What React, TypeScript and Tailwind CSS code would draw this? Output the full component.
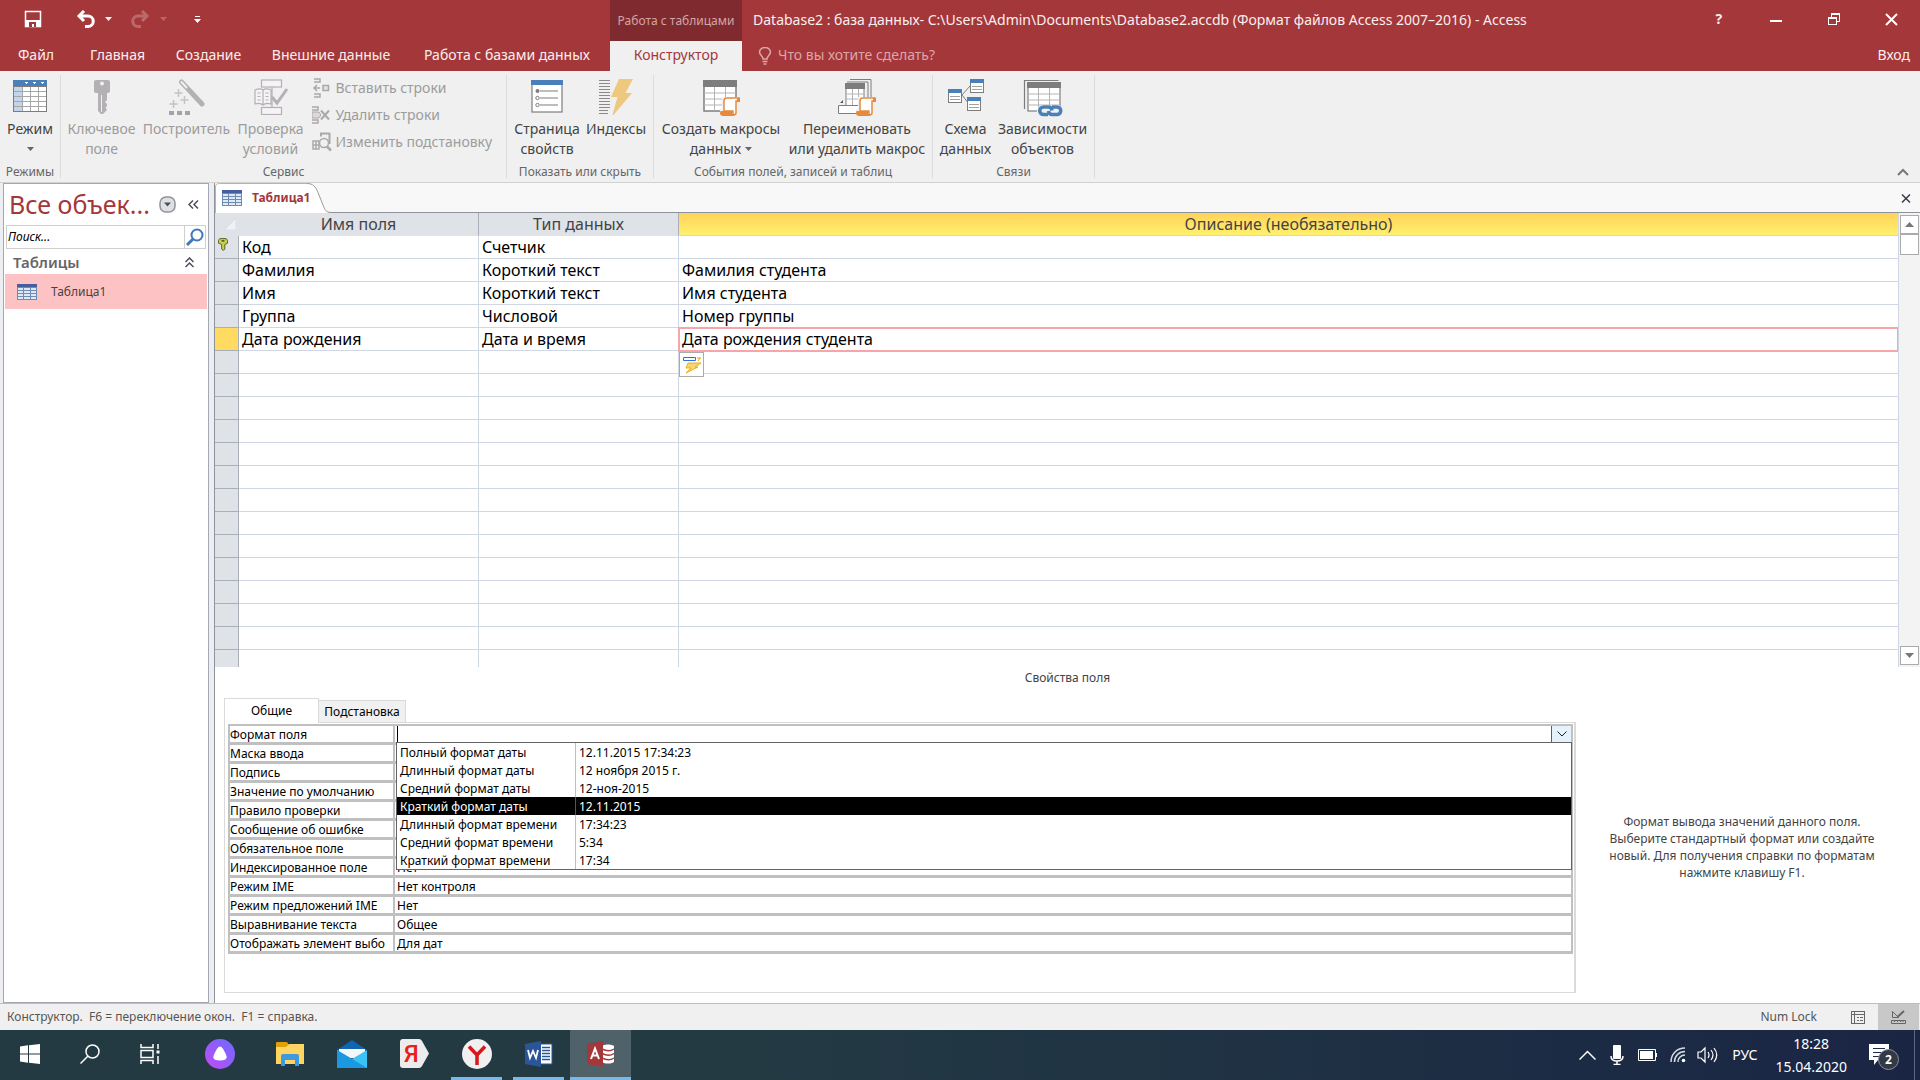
import React, { useState } from 'react';

interface Field {
  name: string;
  type: string;
  description: string;
}

interface Property {
  id: string;
  label: string;
  value: string;
}

const fields: Field[] = [
  { name: 'Код', type: 'Счетчик', description: '' },
  { name: 'Фамилия', type: 'Короткий текст', description: 'Фамилия студента' },
  { name: 'Имя', type: 'Короткий текст', description: 'Имя студента' },
  { name: 'Группа', type: 'Числовой', description: 'Номер группы' },
  { name: 'Дата рождения', type: 'Дата и время', description: 'Дата рождения студента' },
];

const ACTIVE_ROW = 4;
const EMPTY_ROWS = 14;

const properties: Property[] = [
  { id: 'format', label: 'Формат поля', value: '' },
  { id: 'mask', label: 'Маска ввода', value: '' },
  { id: 'caption', label: 'Подпись', value: '' },
  { id: 'default', label: 'Значение по умолчанию', value: '' },
  { id: 'rule', label: 'Правило проверки', value: '' },
  { id: 'error', label: 'Сообщение об ошибке', value: '' },
  { id: 'required', label: 'Обязательное поле', value: '' },
  { id: 'indexed', label: 'Индексированное поле', value: 'Нет' },
  { id: 'ime', label: 'Режим IME', value: 'Нет контроля' },
  { id: 'sentence', label: 'Режим предложений IME', value: 'Нет' },
  { id: 'align', label: 'Выравнивание текста', value: 'Общее' },
  { id: 'picker', label: 'Отображать элемент выбо', value: 'Для дат' },
];

const formats = [
  ['Полный формат даты', '12.11.2015 17:34:23'],
  ['Длинный формат даты', '12 ноября 2015 г.'],
  ['Средний формат даты', '12-ноя-2015'],
  ['Краткий формат даты', '12.11.2015'],
  ['Длинный формат времени', '17:34:23'],
  ['Средний формат времени', '5:34'],
  ['Краткий формат времени', '17:34'],
];

/* ---------- ribbon icons ---------- */

const ViewIcon = () => (
  <svg width="36" height="36" viewBox="0 0 36 36" shapeRendering="crispEdges">
    <rect x="2" y="2" width="32" height="30" fill="#fff" stroke="#7d7d7d" />
    <rect x="2" y="7" width="8" height="25" fill="#c3d5ea" />
    <rect x="1" y="1" width="34" height="6" fill="#4a80b9" />
    <path d="M10.500 7v25M18.500 7v25M26.500 7v25M2 12.500h32M2 17.500h32M2 22.500h32M2 27.500h32" stroke="#a6a6a6" fill="none" />
    <path d="M12 3h4l-2 2zM20 3h4l-2 2zM28 3h4l-2 2z" fill="#fff" />
    <rect x="1.500" y="7" width="33" height="25.500" fill="none" stroke="#7d7d7d" />
  </svg>
);

const KeyIcon = () => (
  <svg width="36" height="36" viewBox="0 0 36 36">
    <path d="M12 1h12q2 0 2 2v9q0 2-2 2h-1v7l-2 2 2 2v2l-1.500 1.500L23 31l-4 4h-2l-3-3V14h-2q-2 0-2-2V3q0-2 2-2z" fill="#b3b1b3" />
    <circle cx="18" cy="4.500" r="2" fill="#f0f0f0" />
    <path d="M17.500 16v17" stroke="#f0f0f0" strokeWidth="1" />
  </svg>
);

const BuilderIcon = () => (
  <svg width="36" height="36" viewBox="0 0 36 36">
    <path d="M12.500 3L33 25" stroke="#b3b1b3" strokeWidth="5" strokeLinecap="round" />
    <path d="M12.500 3l5 5.500" stroke="#f0f0f0" strokeWidth="2" strokeLinecap="round" />
    <path d="M9.500 10v8M5.500 14h8M4.500 21v8M0.500 25h8M15.500 17v8M11.500 21h8" stroke="#c4c2c4" strokeWidth="1.500" />
    <path d="M0 32h5v4H0zM8 32h5v4H8zM16 32h5v4h-5z" fill="#a5a3a5" />
  </svg>
);

const RulesIcon = () => (
  <svg width="36" height="36" viewBox="0 0 36 36" fill="#f7f2f7" stroke="#b3b1b3" strokeWidth="1.200">
    <path d="M19 8v20" />
    <rect x="8.500" y="1" width="20" height="7" />
    <rect x="8.500" y="28.500" width="20" height="7" />
    <path d="M2 11c3-1.500 6-1.500 8 0 2-1.500 5-1.500 8 0v14c-3-1-6-1-8 1-2-2-5-2-8-1zM10 11v15M4.500 14h3M4.500 17.500h3M4.500 21h3M12.500 14h3M12.500 17.500h3M12.500 21h3" />
    <path d="M19 18l5 6L34 10" fill="none" strokeWidth="3" />
  </svg>
);

const InsertRowsIcon = () => (
  <svg width="18" height="20" viewBox="0 0 18 20" fill="none" stroke="#aaa8aa" strokeWidth="1.500">
    <path d="M2 1h6v3H2M2 19h6v-3H2M8 10H2M5 7l-3 3 3 3" />
    <rect x="11" y="7.500" width="5.500" height="5" fill="#e6dfe6" />
  </svg>
);

const DeleteRowsIcon = () => (
  <svg width="18" height="20" viewBox="0 0 18 20" fill="none" stroke="#aaa8aa" strokeWidth="1.500">
    <path d="M0 2h6v3H0M0 18h6v-3H0" />
    <path d="M0 7h7l2 3-2 3H0z" fill="#ddd6dd" strokeWidth="1" />
    <path d="M9 5.500l8 9M17 5.500l-8 9" strokeWidth="2" />
  </svg>
);

const LookupIcon = () => (
  <svg width="20" height="20" viewBox="0 0 20 20" fill="none" stroke="#aaa8aa" strokeWidth="1.500">
    <path d="M8 1.500h10M9 4.500V1M17.500 1v11" strokeWidth="2" />
    <path d="M1 9h6v8H1zM1 13h6M4 9v8" />
    <circle cx="12" cy="11" r="4.500" fill="#f3eef3" />
    <path d="M15 14.500l4 4" strokeWidth="2.500" />
  </svg>
);

const PropertySheetIcon = () => (
  <svg width="36" height="36" viewBox="0 0 36 36" fill="none">
    <rect x="3" y="2" width="30" height="31" fill="#fff" stroke="#7d7d7d" strokeWidth="1.200" />
    <rect x="2" y="1" width="32" height="5" fill="#4a80b9" />
    <circle cx="8.500" cy="12" r="2" fill="#7d7d7d" />
    <circle cx="8.500" cy="19" r="1.700" stroke="#7d7d7d" />
    <circle cx="8.500" cy="26" r="1.700" stroke="#7d7d7d" />
    <path d="M11 12h18M11 19h18M11 26h18" stroke="#7d7d7d" strokeWidth="1.200" />
  </svg>
);

const IndexesIcon = () => (
  <svg width="36" height="37" viewBox="0 0 36 37">
    <path d="M1 1.500h11M1 4.500h11M1 7.500h11M1 10.500h11M1 13.500h11M1 16.500h11M1 19.500h11M1 22.500h11M1 25.500h11M1 28.500h11M1 31.500h9M1 34.500h9" stroke="#8a8a8a" shapeRendering="crispEdges" />
    <path d="M21 0h14l-7.500 14H34L15.500 36h-1L19.500 18H13z" fill="#edc87e" />
  </svg>
);

const Scroll = () => (
  <g strokeWidth="1.500">
    <path d="M20 18h18v5h-3v14H18v-7h2z" fill="#f0f0f0" />
    <path d="M22 32V22q0-3 3-3h12v3h-3v12q0 2-3 2V32z" fill="#fff" stroke="#e58a3c" />
    <path d="M19 32h11q0 3 3 4-1 1-3 1H21q-3 0-3-3 0-2 1-2z" fill="#e58a3c" />
    <path d="M35 19h3v4h-3z" fill="#e58a3c" />
  </g>
);

const CreateMacroIcon = () => (
  <svg width="38" height="38" viewBox="0 0 38 38">
    <rect x="2" y="2" width="32" height="30" fill="#fff" stroke="#7d7d7d" strokeWidth="1.500" />
    <rect x="1" y="1" width="34" height="7" fill="#7d7d7d" />
    <path d="M2 14h32M2 20h32M2 26h32M12.500 8v24M23.500 8v24" stroke="#b4b4b4" />
    <Scroll />
  </svg>
);

const RenameMacroIcon = () => (
  <svg width="38" height="38" viewBox="0 0 38 38">
    <path d="M12 0.500h21V20M9 3h21V20" fill="none" stroke="#7d7d7d" />
    <rect x="8" y="5" width="18" height="24" fill="#fff" stroke="#7d7d7d" />
    <rect x="7" y="4" width="20" height="6" fill="#7d7d7d" />
    <path d="M8 15h18M8 20h18M14.500 10v16M20.500 10v16" stroke="#b4b4b4" />
    <path d="M0.500 26.500h20v8h-20z" fill="#fff" stroke="#7d7d7d" />
    <path d="M2 24l3-3v3z" fill="#555" />
    <Scroll />
  </svg>
);

const RelationsIcon = () => (
  <svg width="38" height="36" viewBox="0 0 38 36">
    <path d="M15 16l8-9M15 16l7 9" stroke="#7d7d7d" />
    <g fill="#fff" stroke="#7d7d7d">
      <rect x="23.500" y="0.500" width="13" height="13" />
      <rect x="1.500" y="10.500" width="13" height="13" />
      <rect x="20.500" y="18.500" width="13" height="13" />
    </g>
    <path d="M23 0h14v4H23zM1 10h14v4H1zM20 18h14v4H20z" fill="#4a80b9" />
    <path d="M25 7.500h10M25 10.500h10M3 17.500h10M3 20.500h10M22 25.500h10M22 28.500h10" stroke="#a0a0a0" />
  </svg>
);

const DependenciesIcon = () => (
  <svg width="40" height="38" viewBox="0 0 40 38">
    <path d="M1.500 30V1.500h34" fill="none" stroke="#7d7d7d" strokeWidth="1.200" />
    <rect x="5" y="4" width="32" height="28" fill="#fff" stroke="#7d7d7d" strokeWidth="1.200" />
    <rect x="4" y="3" width="34" height="6" fill="#7d7d7d" />
    <path d="M5 15h32M5 21h32M5 26h32M15.500 9v23M26.500 9v23" stroke="#b4b4b4" />
    <rect x="14" y="26" width="26" height="12" rx="6" fill="#f0f0f0" />
    <path d="M25 35.500h-4.500a3.700 3.700 0 0 1 0-7.500h5q3 0 3.500 3.500M29 28h5a3.700 3.700 0 0 1 0 7.500h-5q-3 0-3.500-3.500" fill="none" stroke="#4a80b9" strokeWidth="3.500" />
  </svg>
);

const TableIcon = () => (
  <svg width="20" height="16" viewBox="0 0 20 16" shapeRendering="crispEdges">
    <rect width="20" height="16" fill="#6f8ab5" />
    <rect width="20" height="3" fill="#465f9c" />
    <path d="M1 4h5v2H1zM7 4h6v2H7zM14 4h5v2h-5zM1 7h5v2H1zM7 7h6v2H7zM14 7h5v2h-5zM1 10h5v2H1zM7 10h6v2H7zM14 10h5v2h-5zM1 13h5v2H1zM7 13h6v2H7zM14 13h5v2h-5z" fill="#dfe8f5" />
  </svg>
);

/* ---------- ribbon ---------- */

interface RibbonButtonProps {
  icon: React.ReactNode;
  lines: string[];
  width: string;
  disabled?: boolean;
  caret?: boolean;
}

const Caret = ({ className = '' }: { className?: string }) => (
  <svg className={className} width="7" height="4" viewBox="0 0 7 4">
    <path d="M0 0h7L3.500 4z" fill="currentColor" />
  </svg>
);

const RibbonButton: React.FC<RibbonButtonProps> = ({ icon, lines, width, disabled, caret }) => (
  <button
    disabled={disabled}
    className={`${width} flex shrink-0 flex-col items-center text-sm leading-5 whitespace-nowrap ${disabled ? 'text-[#9c9c9c]' : 'text-[#444]'}`}
  >
    <span className="flex h-10 items-start justify-center">{icon}</span>
    <span>{lines[0]}</span>
    <span className="flex h-5 items-center gap-1">
      {lines[1]}
      {caret && <Caret className="text-[#666]" />}
    </span>
  </button>
);

const RibbonGroup = ({ title, width, children }: { title: string; width: string; children: React.ReactNode }) => (
  <section className={`${width} my-1 flex shrink-0 flex-col border-r border-[#dcdcdc]`}>
    <div className="flex flex-1 justify-center pt-1">{children}</div>
    <h2 className="text-center text-xs leading-3 text-[#666]">{title}</h2>
  </section>
);

const Ribbon = () => (
  <div className="flex h-[112px] shrink-0 border-b border-[#d2d2d2] bg-[#f0f0f0]">
    <RibbonGroup title="Режимы" width="w-[61px]">
      <RibbonButton icon={<ViewIcon />} lines={['Режим']} width="w-[58px]" caret />
    </RibbonGroup>
    <RibbonGroup title="Сервис" width="w-[446px]">
      <RibbonButton icon={<KeyIcon />} lines={['Ключевое', 'поле']} width="w-[76px]" disabled />
      <RibbonButton icon={<BuilderIcon />} lines={['Построитель']} width="w-[94px]" disabled />
      <RibbonButton icon={<RulesIcon />} lines={['Проверка', 'условий']} width="w-[74px]" disabled />
      <div className="flex w-[196px] flex-col items-start pl-1 text-sm leading-[27px] whitespace-nowrap text-[#9c9c9c]">
        <button disabled className="-mt-[5px] flex items-center gap-1">
          <span className="w-5"><InsertRowsIcon /></span>Вставить строки
        </button>
        <button disabled className="flex items-center gap-1">
          <span className="w-5"><DeleteRowsIcon /></span>Удалить строки
        </button>
        <button disabled className="flex items-center gap-1">
          <span className="w-5"><LookupIcon /></span>Изменить подстановку
        </button>
      </div>
    </RibbonGroup>
    <RibbonGroup title="Показать или скрыть" width="w-[147px]">
      <RibbonButton icon={<PropertySheetIcon />} lines={['Страница', 'свойств']} width="w-[72px]" />
      <RibbonButton icon={<IndexesIcon />} lines={['Индексы']} width="w-[66px]" />
    </RibbonGroup>
    <RibbonGroup title="События полей, записей и таблиц" width="w-[279px]">
      <RibbonButton icon={<CreateMacroIcon />} lines={['Создать макросы', 'данных']} width="w-[128px]" caret />
      <RibbonButton icon={<RenameMacroIcon />} lines={['Переименовать', 'или удалить макрос']} width="w-[144px]" />
    </RibbonGroup>
    <RibbonGroup title="Связи" width="w-[162px]">
      <RibbonButton icon={<RelationsIcon />} lines={['Схема', 'данных']} width="w-[58px]" />
      <RibbonButton icon={<DependenciesIcon />} lines={['Зависимости', 'объектов']} width="w-[96px]" />
    </RibbonGroup>
    <div className="flex flex-1 items-end justify-end px-[11px] pb-[6px]">
      <button aria-label="Свернуть ленту">
        <svg width="12" height="8" viewBox="0 0 12 8" fill="none" stroke="#777" strokeWidth="2">
          <path d="M1 7l5-5 5 5" />
        </svg>
      </button>
    </div>
  </div>
);

/* ---------- title bar ---------- */

const TitleBar = () => (
  <header className="shrink-0 bg-[#a4373a] text-[#fbeeee]">
    <div className="flex h-[41px]">
      <div className="flex w-[610px] items-center pb-[3px] pl-[24px]">
        <button aria-label="Сохранить">
          <svg width="18" height="18" viewBox="0 0 18 18">
            <path d="M1.500 1.500h15v15h-15z" fill="none" stroke="#fff" strokeWidth="1.500" />
            <path d="M2 10h14v6H2z" fill="#fff" />
            <path d="M5 12h7v5h-2v-3H8v3H5z" fill="#a4373a" />
          </svg>
        </button>
        <button aria-label="Отменить" className="ml-[34px]">
          <svg width="20" height="18" viewBox="0 0 20 18" fill="none" stroke="#fff" strokeWidth="3">
            <path d="M8 1L3 6l5 5M3 6h9a5 5 0 0 1 0 10.500H9" />
          </svg>
        </button>
        <button aria-label="Список отмены" className="ml-[9px]"><Caret /></button>
        <button aria-label="Вернуть" disabled className="ml-[18px] opacity-25">
          <svg width="20" height="18" viewBox="0 0 20 18" fill="none" stroke="#fff" strokeWidth="3">
            <path d="M12 1l5 5-5 5M17 6H8a5 5 0 0 0 0 10.500h3" />
          </svg>
        </button>
        <button aria-label="Список возврата" disabled className="ml-[10px] opacity-25"><Caret /></button>
        <button aria-label="Настройка панели быстрого доступа" className="ml-[27px]">
          <svg width="7" height="7" viewBox="0 0 7 7" fill="#fff">
            <path d="M1 0h5v1H1zM0 3h7L3.500 7z" />
          </svg>
        </button>
      </div>
      <div className="flex w-[132px] items-center justify-center bg-[#7f2a2e] text-xs whitespace-nowrap text-[#d3a5a7]">
        Работа с таблицами
      </div>
      <h1 className="flex-1 pl-[11px] text-sm leading-10 whitespace-nowrap">
        Database2 : база данных- C:\Users\Admin\Documents\Database2.accdb (Формат файлов Access 2007–2016) - Access
      </h1>
      <div className="flex w-[230px] items-center pb-[3px]">
        <button className="flex-1 text-sm font-bold">?</button>
        <button aria-label="Свернуть" className="flex flex-1 justify-center pt-1">
          <span className="h-[2px] w-3 bg-white" />
        </button>
        <button aria-label="Восстановить" className="flex flex-1 justify-center">
          <svg width="13" height="12" viewBox="0 0 13 12" fill="none" stroke="#fff" shapeRendering="crispEdges">
            <path d="M1 4.500h8v7H1zM4.500 4V1H12v7H9" strokeWidth="1" />
            <path d="M4 1h8.500M0.500 4.500h9" strokeWidth="2" />
          </svg>
        </button>
        <button aria-label="Закрыть" className="flex flex-1 justify-center">
          <svg width="13" height="13" viewBox="0 0 13 13" stroke="#fff" strokeWidth="2">
            <path d="M1 1l11 11M12 1L1 12" />
          </svg>
        </button>
      </div>
    </div>
    <nav className="flex h-[30px] text-sm leading-7 whitespace-nowrap">
      <button className="w-[72px] pb-[2px]">Файл</button>
      <button className="w-[91px] pb-[2px]">Главная</button>
      <button className="w-[91px] pb-[2px]">Создание</button>
      <button className="w-[154px] pb-[2px]">Внешние данные</button>
      <button className="w-[202px] pr-1 pb-[2px]">Работа с базами данных</button>
      <button className="w-[132px] bg-[#f0f0f0] pb-[2px] text-[#a4373a]">Конструктор</button>
      <label htmlFor="tell-me" className="flex items-center pl-4">
        <svg width="14" height="18" viewBox="0 0 14 18" fill="none" stroke="#dba6a8" strokeWidth="1.500">
          <path d="M5 12c0-3-3.500-4-3.500-7a5.500 4.500 0 0 1 11 0c0 3-3.500 4-3.500 7zM4.500 14.500h5M5.500 17h3" />
        </svg>
      </label>
      <input
        id="tell-me"
        placeholder="Что вы хотите сделать?"
        className="ml-[6px] h-7 min-w-0 flex-1 bg-transparent outline-none placeholder:text-[#dba6a8]"
      />
      <button className="px-[10px] pb-[2px]">Вход</button>
    </nav>
  </header>
);

/* ---------- navigation pane ---------- */

const NavigationPane = () => (
  <aside className="flex w-[215px] shrink-0 border-r border-[#8d929b] bg-[#eceef1] pl-[3px]">
    <div className="flex w-[206px] flex-col border border-[#a3a8b4] bg-white">
      <div className="flex h-[41px] items-center pl-[5px] text-[#a4373a]">
        <h2 className="w-[150px] text-[25px] whitespace-nowrap">Все объек...</h2>
        <button aria-label="Категории">
          <svg width="17" height="17" viewBox="0 0 17 17">
            <rect x="1" y="1" width="15" height="15" rx="6" fill="#dfe0e4" stroke="#90939b" strokeWidth="1.500" />
            <path d="M5 6.500h7L8.500 10.500z" fill="#4c4f5c" />
          </svg>
        </button>
        <button aria-label="Свернуть область" className="ml-3">
          <svg width="11" height="9" viewBox="0 0 11 9" fill="none" stroke="#4c4f5c" strokeWidth="1.500">
            <path d="M5 0.500l-4 4 4 4M10 0.500l-4 4 4 4" />
          </svg>
        </button>
      </div>
      <div className="mx-[2px] flex h-6 border border-[#cfcfcf]">
        <input
          aria-label="Поиск"
          placeholder="Поиск..."
          className="min-w-0 flex-1 border-r border-[#cfcfcf] pl-px text-xs italic outline-none placeholder:text-black"
        />
        <button aria-label="Найти" className="flex w-[20px] items-center justify-center">
          <svg width="18" height="19" viewBox="0 0 18 19" fill="none" stroke="#3f79ba" strokeWidth="2">
            <circle cx="11" cy="7" r="5.500" />
            <path d="M7 11l-6 6" strokeWidth="3" />
          </svg>
        </button>
      </div>
      <button className="flex h-[25px] items-center justify-between pt-px pr-[14px] pl-[9px] text-[15px] font-semibold text-[#666]">
        Таблицы
        <svg width="9" height="11" viewBox="0 0 9 11" fill="none" stroke="#4c4f5c" strokeWidth="1.500">
          <path d="M0.500 5l4-4 4 4M0.500 10l4-4 4 4" />
        </svg>
      </button>
      <a href="#table1" className="mr-px ml-px flex h-[35px] items-center gap-[14px] bg-[#fdc2c4] pl-3 text-xs text-[#444]">
        <TableIcon />
        Таблица1
      </a>
    </div>
  </aside>
);

/* ---------- design grid ---------- */

const FieldGrid = () => (
  <div className="flex min-h-0 flex-1">
    <div className="min-w-0 flex-1 overflow-hidden border-r border-[#cfd6e4]">
      <table className="w-full table-fixed border-separate border-spacing-0 text-left text-base leading-[22px] text-black">
        <colgroup>
          <col className="w-[24px]" />
          <col className="w-[240px]" />
          <col className="w-[200px]" />
          <col />
        </colgroup>
        <thead>
          <tr className="h-[23px] text-center text-[#444]">
            <th aria-label="Выделить все" className="border-b border-[#dfe2e7] bg-[#dfe2e7] p-0">
              <svg className="ml-[9px]" width="12" height="12" viewBox="0 0 12 12">
                <path d="M12 0v12H0z" fill="#eef1f5" stroke="#c9ced8" strokeWidth="0.500" />
              </svg>
            </th>
            <th className="border-r border-b border-[#a9aeb8] border-b-[#dfe2e7] bg-[#dfe2e7] p-0 font-normal">Имя поля</th>
            <th className="border-r border-b border-[#a9aeb8] border-b-[#dfe2e7] bg-[#dfe2e7] p-0 font-normal">Тип данных</th>
            <th className="border-b border-[#cfd6e4] bg-linear-to-b from-[#ffd35a] to-[#fff06e] p-0 font-normal">
              Описание (необязательно)
            </th>
          </tr>
        </thead>
        <tbody>
          {fields.map((field, i) => {
            const active = i === ACTIVE_ROW;
            return (
              <tr key={field.name} className="h-[23px]">
                <td className={`border-r border-b border-[#a9aeb8] p-0 ${active ? 'bg-[#ffdb62]' : 'bg-[#dfe2e7]'}`}>
                  {i === 0 && (
                    <svg className="-mt-[6px] ml-[3px]" width="10" height="13" viewBox="0 0 11 14">
                      <path d="M2 0.500h7l1.500 2v3L7.500 7v5L6 13.500 4 12V7L0.500 5.500v-3z" fill="#c6cf4e" stroke="#4f5a1e" />
                      <path d="M4 3h3" stroke="#3c4416" strokeWidth="1.500" />
                    </svg>
                  )}
                </td>
                <td className="border-r border-b border-[#cfd6e4] py-0 pr-0 pl-[3px]">{field.name}</td>
                <td className="border-r border-b border-[#cfd6e4] py-0 pr-0 pl-[3px]">{field.type}</td>
                <td
                  className={
                    active
                      ? 'border-b border-[#f8a5aa] p-0 pl-[3px] outline-2 -outline-offset-1 outline-[#f8a5aa]'
                      : 'border-b border-[#cfd6e4] p-0 pl-[3px]'
                  }
                >
                  <div className="relative">
                    {field.description}
                    {active && (
                      <button
                        aria-label="Параметры обновления свойств"
                        className="absolute top-6 -left-[3px] z-10 flex h-[25px] w-[25px] items-center justify-center border border-[#ababab] bg-white"
                      >
                        <svg width="19" height="18" viewBox="0 0 19 18">
                          <path d="M1.500 1.500h12v3h-12z" fill="#fff" stroke="#2f6fe0" />
                          <path d="M6 7h13l-6 4h3L4 17l5-5H4z" fill="#f7d671" stroke="#e0a400" strokeWidth="0.800" />
                          <path d="M15 2h4M16 5l2-3" stroke="#e0a400" />
                        </svg>
                      </button>
                    )}
                  </div>
                </td>
              </tr>
            );
          })}
          {Array.from({ length: EMPTY_ROWS }, (_, i) => (
            <tr key={i} className="h-[23px]">
              <td className="border-r border-b border-[#a9aeb8] bg-[#dfe2e7] p-0" />
              <td className="border-r border-b border-[#cfd6e4] p-0" />
              <td className="border-r border-b border-[#cfd6e4] p-0" />
              <td className="border-b border-[#cfd6e4] p-0" />
            </tr>
          ))}
        </tbody>
      </table>
    </div>
    <div className="flex w-[21px] shrink-0 flex-col bg-[#f3f3f3] px-px pt-[2px] pb-[2px]">
      <button aria-label="Вверх" className="flex h-[19px] items-center justify-center border border-[#ababab] bg-white">
        <svg width="9" height="5" viewBox="0 0 9 5"><path d="M0 5h9L4.500 0z" fill="#777" /></svg>
      </button>
      <div className="h-[21px] border border-[#ababab] bg-white" />
      <div className="flex-1" />
      <button aria-label="Вниз" className="flex h-[19px] items-center justify-center border border-[#ababab] bg-white">
        <svg width="9" height="5" viewBox="0 0 9 5"><path d="M0 0h9L4.500 5z" fill="#777" /></svg>
      </button>
    </div>
  </div>
);

/* ---------- field properties ---------- */

const FieldProperties = () => {
  const [selected, setSelected] = useState(3);

  return (
    <section className="flex h-[336px] shrink-0 flex-col bg-white text-xs text-black">
      <h2 className="h-[31px] pt-px text-center leading-5 text-[#444]">Свойства поля</h2>
      <div className="flex flex-1 pb-[10px] pl-[9px]">
        <div className="flex flex-1 flex-col">
          <div role="tablist" className="flex h-6 items-end">
            <button role="tab" aria-selected="true" className="relative z-10 -mb-px h-[25px] w-[95px] border border-b-0 border-[#dadada] bg-white">
              Общие
            </button>
            <button role="tab" aria-selected="false" className="h-[22px] w-[87px] border border-b-0 border-l-0 border-[#dadada] bg-[#f0f0f0] pt-px">
              Подстановка
            </button>
          </div>
          <div className="relative flex-1 border border-r-2 border-[#dadada] pt-px pr-px pl-[3px]">
            <table className="w-full table-fixed border-separate border-spacing-0 border-t-2 border-l-2 border-[#c0c0c0]">
              <colgroup>
                <col className="w-[165px]" />
                <col />
              </colgroup>
              <tbody>
                {properties.map((prop, i) => (
                  <tr key={prop.id} className="h-[19px]">
                    <td className="overflow-hidden border-r-2 border-b-3 border-[#c0c0c0] p-0 leading-4 whitespace-nowrap">
                      <label htmlFor={prop.id} className="block h-4 pt-px">{prop.label}</label>
                    </td>
                    <td className="border-r-2 border-b-3 border-[#c0c0c0] p-0">
                      <div className="flex h-4">
                        <input
                          id={prop.id}
                          defaultValue={prop.value}
                          className={`h-4 min-w-0 flex-1 pt-px pl-[2px] leading-4 outline-none ${i === 0 ? 'ml-[2px] border-l border-black' : ''}`}
                        />
                        {i === 0 && (
                          <button aria-label="Открыть список" className="flex w-5 items-center justify-center border-l border-[#0078d7] bg-[#e5f1fb]">
                            <svg width="10" height="6" viewBox="0 0 10 6" fill="none" stroke="#222">
                              <path d="M0.500 0.500L5 5l4.500-4.500" />
                            </svg>
                          </button>
                        )}
                      </div>
                    </td>
                  </tr>
                ))}
              </tbody>
            </table>
            <ul role="listbox" aria-label="Формат поля" className="absolute top-[19px] right-[2px] left-[171px] z-10 border border-[#646464] bg-white">
              {formats.map(([name, sample], i) => (
                <li
                  key={name}
                  role="option"
                  aria-selected={i === selected}
                  onClick={() => setSelected(i)}
                  className={`flex h-[18px] leading-5 ${i === selected ? 'bg-black text-white' : ''}`}
                >
                  <span className={`w-[179px] border-r pl-[3px] ${i === selected ? 'border-[#555]' : 'border-[#c0c0c0]'}`}>{name}</span>
                  <span className="pl-[3px]">{sample}</span>
                </li>
              ))}
            </ul>
          </div>
        </div>
        <div className="flex w-[344px] items-center justify-center pt-[2px] pr-3 text-center">
          <p className="w-[280px] leading-[17px] text-[#444]">
            Формат вывода значений данного поля. Выберите стандартный формат или создайте новый. Для получения справки по форматам нажмите клавишу F1.
          </p>
        </div>
      </div>
    </section>
  );
};

const DocumentArea = () => (
  <main className="flex min-w-0 flex-1 flex-col bg-white">
    <div className="flex h-[30px] shrink-0 items-end justify-between border-b border-[#8d929b] bg-[#f8f8f8]">
      <div className="relative -mb-px h-[30px] w-[118px]">
        <svg className="absolute inset-0" width="118" height="30" viewBox="0 0 118 30">
          <path d="M0.500 30V4c0-2 1-3.500 4-3.500h88c6 0 8 3 10.500 9l6 15c1.500 3.500 3 5 7 5.500z" fill="#fff" />
          <path d="M0.500 30V4c0-2 1-3.500 4-3.500h88" fill="none" stroke="#cdb08a" />
          <path d="M92 0.500c6 0 8.500 3 11 9l6 15c1.500 3.500 3 5 8 5" fill="none" stroke="#a09a92" />
        </svg>
        <button className="relative flex h-[30px] items-center gap-[10px] pl-[7px] text-xs font-bold text-[#a4373a]">
          <TableIcon />
          Таблица1
        </button>
      </div>
      <button aria-label="Закрыть таблицу" className="mr-[9px] mb-[9px]">
        <svg width="10" height="9" viewBox="0 0 10 9" stroke="#3c3f4a" strokeWidth="1.500">
          <path d="M1 0.500l8 8M9 0.500l-8 8" />
        </svg>
      </button>
    </div>
    <FieldGrid />
    <FieldProperties />
  </main>
);

const StatusBar = () => (
  <footer className="flex h-[27px] shrink-0 items-stretch border-t border-[#bdbdbd] bg-[#f0f0f0] text-xs text-[#555]">
    <p className="flex-1 pl-[7px] leading-[26px] whitespace-pre">Конструктор.  F6 = переключение окон.  F1 = справка.</p>
    <p className="pr-[20px] leading-[26px]">Num Lock</p>
    <button aria-label="Режим таблицы" className="flex w-[41px] items-center justify-center">
      <svg width="14" height="13" viewBox="0 0 14 13" fill="none" stroke="#666" shapeRendering="crispEdges">
        <path d="M0.500 0.500h13v12H0.500zM0 3.500h14M3.500 0v13M6 6.500h2M9 6.500h3M6 9.500h2M9 9.500h3" />
      </svg>
    </button>
    <button aria-label="Конструктор" className="mr-px flex w-[41px] items-center justify-center bg-[#c8c8c8]">
      <svg width="15" height="14" viewBox="0 0 15 14" fill="none" stroke="#666">
        <path d="M1.500 1.500v6h6l-6-6M0.500 10.500h14v3H0.500zM3.500 11v1M6.500 11v1M9.500 11v1M12 11v1" />
        <path d="M7 6.500l6-5.500" strokeWidth="2" />
      </svg>
    </button>
  </footer>
);

/* ---------- taskbar ---------- */

const TaskbarButton = ({ label, width, className = '', children }: { label: string; width: string; className?: string; children: React.ReactNode }) => (
  <button aria-label={label} className={`flex h-[50px] shrink-0 items-center justify-center border-b-3 ${width} ${className || 'border-transparent'}`}>
    {children}
  </button>
);

const Taskbar = () => (
  <div className="flex h-[50px] shrink-0 bg-linear-to-r from-[#233a43] from-40% to-[#1a2544] text-white">
    <TaskbarButton label="Пуск" width="w-[60px]">
      <svg width="20" height="20" viewBox="0 0 20 20" fill="#fff">
        <path d="M0 2.500l8-1.200V9.500H0zM9 1.200L20 0v9.500H9zM0 10.500h8v8.200L0 17.500zM9 10.500h11V20L9 18.800z" />
      </svg>
    </TaskbarButton>
    <TaskbarButton label="Поиск" width="w-[60px]">
      <svg width="20" height="20" viewBox="0 0 20 20" fill="none" stroke="#fff" strokeWidth="1.500">
        <circle cx="12.500" cy="7.500" r="6.500" />
        <path d="M8 12l-7.500 7.500" />
      </svg>
    </TaskbarButton>
    <TaskbarButton label="Представление задач" width="w-[60px]">
      <svg width="21" height="20" viewBox="0 0 21 20" fill="none" stroke="#fff" strokeWidth="1.500">
        <path d="M1 0v3.500h12V0M1 20v-3.500h12V20M1 6.500h12v7H1zM18 0v5M18 12v8" />
        <path d="M16.500 6.500h3v3h-3z" fill="#fff" stroke="none" />
      </svg>
    </TaskbarButton>
    <TaskbarButton label="Алиса" width="w-[79px]">
      <svg width="30" height="30" viewBox="0 0 30 30">
        <defs>
          <linearGradient id="alice" x1="0" y1="1" x2="1" y2="0">
            <stop offset="0" stopColor="#c34bf5" />
            <stop offset="1" stopColor="#6a6bff" />
          </linearGradient>
        </defs>
        <circle cx="15" cy="15" r="15" fill="url(#alice)" />
        <path d="M15 7.500c2 0 3.500 3 5.500 7s2 7-5.500 7-7.500-3-5.500-7 3.500-7 5.500-7z" fill="#fff" />
      </svg>
    </TaskbarButton>
    <TaskbarButton label="Проводник" width="w-[61px]">
      <svg width="28" height="24" viewBox="0 0 28 24">
        <path d="M0 1q0-1 1-1h10l2 3h14q1 0 1 1v18H0z" fill="#e0a00a" />
        <path d="M0 5h10l3-3h15v20H0z" fill="#ffd461" />
        <path d="M5 24V14q0-2 2-2h14q2 0 2 2v10h-4v-6H9v6z" fill="#3f99df" />
      </svg>
    </TaskbarButton>
    <TaskbarButton label="Почта" width="w-[63px]">
      <svg width="30" height="28" viewBox="0 0 30 28">
        <path d="M0 10L15 0l15 10v8H0z" fill="#0f64b4" />
        <path d="M2 9h26v9H2z" fill="#f4f6f8" />
        <path d="M0 10l15 9 15-9v18H0z" fill="#3cc3f5" />
        <path d="M0 10l30 18H0z" fill="#1a98e0" />
      </svg>
    </TaskbarButton>
    <TaskbarButton label="Яндекс" width="w-[62px]">
      <svg width="29" height="29" viewBox="0 0 29 29">
        <path d="M3 0h16q2 0 3 2l7 12.500L22 27q-1 2-3 2H3q-3 0-3-3V3q0-3 3-3z" fill="#ececec" />
        <text x="4" y="23" fontSize="24" fontWeight="500" fill="#e8201a" fontFamily="Roboto, sans-serif">Я</text>
      </svg>
    </TaskbarButton>
    <TaskbarButton label="Яндекс Браузер" width="w-[51px] mx-[6px]" className="border-[#76b9ed]">
      <svg width="30" height="30" viewBox="0 0 30 30">
        <circle cx="15" cy="15" r="15" fill="#f0f0f0" />
        <path d="M7 7.500l8 8.500 8-8.500M15 16v10" stroke="#d9161a" strokeWidth="3.500" fill="none" />
      </svg>
    </TaskbarButton>
    <TaskbarButton label="Word" width="w-[51px] ml-[5px] mr-[6px]" className="border-[#76b9ed]">
      <svg width="28" height="26" viewBox="0 0 28 26">
        <path d="M14 3h13v20H14z" fill="#fff" stroke="#2a5699" />
        <path d="M17 6.500h8M17 9.500h8M17 12.500h8M17 15.500h8M17 18.500h8" stroke="#2a5699" strokeWidth="1.500" />
        <path d="M0 3l16-3v26L0 23z" fill="#2a5699" />
        <path d="M3 9l2 8L8 10l3 7L13 9" stroke="#fff" strokeWidth="1.800" fill="none" />
      </svg>
    </TaskbarButton>
    <TaskbarButton label="Access" width="w-[61px]" className="border-[#76b9ed] bg-[#4f626a]">
      <svg width="28" height="26" viewBox="0 0 28 26">
        <path d="M15 5c3-2 9-2 12 0v16c-3 2-9 2-12 0z" fill="#fff" />
        <path d="M15 8c4 2 9 2 12 0M15 12.500c4 2 9 2 12 0M15 17c4 2 9 2 12 0" stroke="#a4373a" strokeWidth="1.500" fill="none" />
        <path d="M0 3l16-3v26L0 23z" fill="#a4373a" />
        <path d="M4 18l4-10.500L12 18M5.500 14.500h5" stroke="#fff" strokeWidth="2" fill="none" />
      </svg>
    </TaskbarButton>
    <div className="flex flex-1 items-center justify-end text-sm">
      <button aria-label="Скрытые значки" className="mr-[14px]">
        <svg width="17" height="10" viewBox="0 0 17 10" fill="none" stroke="#fff" strokeWidth="1.500"><path d="M0.500 9.500l8-8 8 8" /></svg>
      </button>
      <button aria-label="Микрофон" className="mr-[14px]">
        <svg width="14" height="20" viewBox="0 0 14 20" fill="none" stroke="#fff">
          <rect x="3" y="0" width="8" height="14" rx="1" fill="#fff" stroke="none" />
          <path d="M1 11c0 3 2 5 6 5s6-2 6-5M7 16v3M3.500 19.500h7" strokeWidth="1.500" />
        </svg>
      </button>
      <button aria-label="Батарея" className="mr-3">
        <svg width="20" height="12" viewBox="0 0 20 12" fill="none" stroke="#fff">
          <path d="M0.500 0.500h17v11h-17zM18.500 4v4" />
          <path d="M2 2h13v8H2z" fill="#fff" stroke="none" />
        </svg>
      </button>
      <button aria-label="Сеть" className="mr-[11px]">
        <svg width="16" height="16" viewBox="0 0 16 16" fill="none" stroke="#d5dae2" strokeWidth="1.500">
          <path d="M1 15C1 7 7 1 15 1M4.500 15C4.500 9 9 4.500 15 4.500M8 15c0-4 3-7 7-7" />
          <circle cx="13.500" cy="13.500" r="1.800" fill="#fff" stroke="none" />
        </svg>
      </button>
      <button aria-label="Громкость" className="mr-[14px]">
        <svg width="21" height="18" viewBox="0 0 21 18" fill="none" stroke="#fff" strokeWidth="1.200">
          <path d="M1 6h3l4-4v14l-4-4H1zM11 6q2 3 0 6M14 4q4 5 0 10M17 2q5.500 7 0 14" />
        </svg>
      </button>
      <button className="mr-[18px] text-sm">РУС</button>
      <button className="mr-[22px] text-center text-sm leading-[23px]">
        <span className="block">18:28</span>
        <span className="block">15.04.2020</span>
      </button>
      <button aria-label="Уведомления" className="relative mr-[15px] h-[30px] w-[30px]">
        <svg width="20" height="22" viewBox="0 0 20 22">
          <path d="M0 0h20v16H9l-4 5v-5H0z" fill="#fff" />
          <path d="M4 4.500h12M4 8.500h12M4 12.500h8" stroke="#1d2b45" strokeWidth="1.200" />
        </svg>
        <span className="absolute right-0 bottom-0 h-[21px] w-[21px] rounded-full border border-[#8a929e] bg-[#333a45] text-center text-xs leading-[19px] font-bold">2</span>
      </button>
      <div className="mr-[5px] h-full w-px bg-[#5d6780]" />
    </div>
  </div>
);

const App: React.FC = () => (
  <div className="flex h-screen flex-col overflow-hidden bg-white font-['Noto_Sans',sans-serif]">
    <TitleBar />
    <Ribbon />
    <div className="flex min-h-0 flex-1">
      <NavigationPane />
      <DocumentArea />
    </div>
    <StatusBar />
    <Taskbar />
  </div>
);

export default App;
